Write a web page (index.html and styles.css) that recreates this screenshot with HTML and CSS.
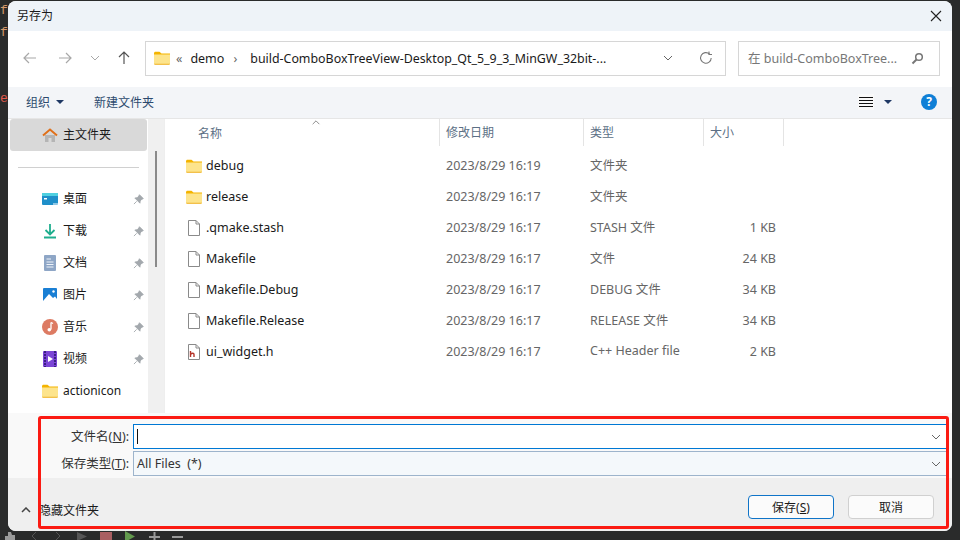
FILE: index.html
```html
<!DOCTYPE html>
<html lang="zh-CN">
<head>
    <meta charset="UTF-8">
    <title>另存为</title>
    <link rel="stylesheet" href="styles.css">
</head>
<body>
    <svg width="0" height="0" class="defs">
        <symbol id="folder" viewBox="0 0 16 14">
            <path d="M0 2.200C0 1.300.6.7 1.500.7H5.500L7.500 2.500H16V4H0Z" fill="#f4b400"/>
            <path d="M0 3.500H16V12.500C16 13.200 15.500 13.700 14.800 13.700H1.200C.5 13.700 0 13.200 0 12.500Z" fill="#fde48c"/>
            <path d="M0 12.700H16V12.800C16 13.300 15.500 13.700 14.800 13.700H1.200C.5 13.700 0 13.300 0 12.800Z" fill="#efb32c"/>
        </symbol>
        <symbol id="file" viewBox="0 0 14 16">
            <path d="M1.500.5H9L12.500 4V15.500H1.500Z" fill="#fff" stroke="#8a8a8a"/>
            <path d="M9 .5V4H12.500" fill="none" stroke="#8a8a8a"/>
        </symbol>
        <symbol id="pin" viewBox="0 0 12 12">
            <path d="M7 .8 11.200 5 9.800 5.600 7.800 7.600 7.600 10 2 4.400 4.400 4.200 6.400 2.200ZM4 8 1 11" fill="#a3a8ad" stroke="#a3a8ad"/>
        </symbol>
        <symbol id="chev" viewBox="0 0 10 6">
            <path d="M1 1 5 5 9 1" fill="none" stroke="currentColor" stroke-width="1"/>
        </symbol>
    </svg>

    <div class="side-code">
        <span class="code-f">f</span>
        <span class="code-f">f</span>
        <span class="code-e">e</span>
    </div>

    <div class="dialog">
        <div class="titlebar">
            <span>另存为</span>
            <svg class="close" width="12" height="12" viewBox="0 0 12 12"><path d="M1 1 11 11M11 1 1 11" stroke="#222" stroke-width="1.100"/></svg>
        </div>

        <div class="navbar">
            <svg class="nav-icon" width="14" height="12" viewBox="0 0 14 12"><path d="M13 6H1M6 1 1 6 6 11" fill="none" stroke="#a8a8a8" stroke-width="1.200"/></svg>
            <svg class="nav-icon fwd" width="14" height="12" viewBox="0 0 14 12"><path d="M1 6H13M8 1 13 6 8 11" fill="none" stroke="#a8a8a8" stroke-width="1.200"/></svg>
            <svg class="nav-chev" width="10" height="6"><use href="#chev"/></svg>
            <svg class="nav-up" width="12" height="14" viewBox="0 0 12 14"><path d="M6 13V1M1 6 6 1 11 6" fill="none" stroke="#555" stroke-width="1.200"/></svg>
            <div class="address">
                <svg class="addr-folder" width="16" height="14"><use href="#folder"/></svg>
                <span class="crumb-more">«</span>
                <span class="crumb">demo</span>
                <span class="crumb-sep">›</span>
                <span class="crumb crumb-long">build-ComboBoxTreeView-Desktop_Qt_5_9_3_MinGW_32bit-...</span>
                <svg class="addr-chev" width="10" height="6"><use href="#chev"/></svg>
                <svg class="refresh" width="14" height="14" viewBox="0 0 14 14"><path d="M12.200 7A5.300 5.300 0 1 1 10.500 3" fill="none" stroke="#777" stroke-width="1.100"/><path d="M10 .5V3.500H13" fill="none" stroke="#777" stroke-width="1.100"/></svg>
            </div>
            <div class="search">
                <span>在 build-ComboBoxTree...</span>
                <svg width="13" height="13" viewBox="0 0 13 13"><circle cx="8" cy="5" r="3.300" fill="none" stroke="#777" stroke-width="1.500"/><path d="M5.500 7.500 1.500 11.500" stroke="#777" stroke-width="2"/></svg>
            </div>
        </div>

        <div class="toolbar">
            <span class="organize">组织</span>
            <span class="caret"></span>
            <span class="new-folder">新建文件夹</span>
            <div class="toolbar-right">
                <span class="view-btn"><i></i><i></i><i></i><i></i></span>
                <span class="caret"></span>
                <span class="help">?</span>
            </div>
        </div>

        <div class="main">
            <div class="sidebar">
                <div class="home-item">
                    <svg width="16" height="15" viewBox="0 0 16 15"><path d="M3 7V14H6.500V10H9.500V14H13V7Z" fill="#b5b5b5"/><path d="M1 7.500 8 1.500 15 7.500" fill="none" stroke="#e0701a" stroke-width="2"/></svg>
                    <span>主文件夹</span>
                </div>
                <div class="side-rule"></div>
                <div class="side-item">
                    <svg width="16" height="12" viewBox="0 0 16 12"><rect width="16" height="12" rx="1" fill="#1f8fc9"/><rect width="16" height="3" fill="#4fd0e0"/><rect x="2" y="5" width="3" height="1.500" fill="#fff"/><rect x="11" y="10.500" width="5" height="1" fill="#fff"/></svg>
                    <span>桌面</span><svg class="pin" width="11" height="11"><use href="#pin"/></svg>
                </div>
                <div class="side-item">
                    <svg width="16" height="16" viewBox="0 0 16 16"><path d="M8 1V11M3.500 7 8 11.500 12.500 7" fill="none" stroke="#1fae8e" stroke-width="1.800"/><path d="M2 14.500H14" stroke="#1fae8e" stroke-width="2"/></svg>
                    <span>下载</span><svg class="pin" width="11" height="11"><use href="#pin"/></svg>
                </div>
                <div class="side-item">
                    <svg width="16" height="16" viewBox="0 0 16 16"><rect x="2" width="12" height="16" rx="1" fill="#8ea6c6"/><path d="M4.500 4H9M4.500 7H11.500M4.500 9.500H11.500M4.500 12H11.500" stroke="#eef3f9" stroke-width="1"/></svg>
                    <span>文档</span><svg class="pin" width="11" height="11"><use href="#pin"/></svg>
                </div>
                <div class="side-item">
                    <svg width="16" height="16" viewBox="0 0 16 16"><rect x="1" y="1" width="14" height="14" rx="1" fill="#1a7fd4"/><path d="M1 14 7 7 11 11 13 9.500 15 12V15H1Z" fill="#fff"/><circle cx="11.500" cy="4.500" r="1.200" fill="#fff"/></svg>
                    <span>图片</span><svg class="pin" width="11" height="11"><use href="#pin"/></svg>
                </div>
                <div class="side-item">
                    <svg width="16" height="16" viewBox="0 0 16 16"><circle cx="8" cy="8" r="8" fill="#dd7b63"/><path d="M9 3.500V10.500" stroke="#fff" stroke-width="1.300"/><circle cx="7.300" cy="10.800" r="1.800" fill="#fff"/><path d="M9 3.500 11 4.500" stroke="#fff" stroke-width="1.300"/></svg>
                    <span>音乐</span><svg class="pin" width="11" height="11"><use href="#pin"/></svg>
                </div>
                <div class="side-item">
                    <svg width="16" height="16" viewBox="0 0 16 16"><rect x="1" width="14" height="16" rx="1" fill="#7b45d6"/><path d="M3 0V16M13 0V16" stroke="#3c1f85" stroke-width="2" stroke-dasharray="2 1"/><path d="M6 5 11 8 6 11Z" fill="#fff"/></svg>
                    <span>视频</span><svg class="pin" width="11" height="11"><use href="#pin"/></svg>
                </div>
                <div class="side-item">
                    <svg width="16" height="14"><use href="#folder"/></svg>
                    <span>actionicon</span>
                </div>
            </div>

            <div class="side-scroll"><div class="thumb"></div></div>

            <div class="files">
                <div class="file-head">
                    <svg class="sort-up" width="10" height="5" viewBox="0 0 10 6"><path d="M1 5 5 1 9 5" fill="none" stroke="#777" stroke-width="1"/></svg>
                    <span class="col-name head-name">名称</span>
                    <span class="col-date">修改日期</span>
                    <span class="col-type">类型</span>
                    <span class="col-size">大小</span>
                </div>
                <div class="file-row">
                    <span class="col-name"><svg width="16" height="14"><use href="#folder"/></svg>debug</span>
                    <span class="col-date">2023/8/29 16:19</span><span class="col-type">文件夹</span><span class="col-size"></span>
                </div>
                <div class="file-row">
                    <span class="col-name"><svg width="16" height="14"><use href="#folder"/></svg>release</span>
                    <span class="col-date">2023/8/29 16:17</span><span class="col-type">文件夹</span><span class="col-size"></span>
                </div>
                <div class="file-row">
                    <span class="col-name"><svg width="16" height="16"><use href="#file"/></svg>.qmake.stash</span>
                    <span class="col-date">2023/8/29 16:17</span><span class="col-type">STASH 文件</span><span class="col-size">1 KB</span>
                </div>
                <div class="file-row">
                    <span class="col-name"><svg width="16" height="16"><use href="#file"/></svg>Makefile</span>
                    <span class="col-date">2023/8/29 16:17</span><span class="col-type">文件</span><span class="col-size">24 KB</span>
                </div>
                <div class="file-row">
                    <span class="col-name"><svg width="16" height="16"><use href="#file"/></svg>Makefile.Debug</span>
                    <span class="col-date">2023/8/29 16:17</span><span class="col-type">DEBUG 文件</span><span class="col-size">34 KB</span>
                </div>
                <div class="file-row">
                    <span class="col-name"><svg width="16" height="16"><use href="#file"/></svg>Makefile.Release</span>
                    <span class="col-date">2023/8/29 16:17</span><span class="col-type">RELEASE 文件</span><span class="col-size">34 KB</span>
                </div>
                <div class="file-row">
                    <span class="col-name"><svg width="16" height="16" viewBox="0 0 16 16"><use href="#file"/><path d="M4.500 7V13M4.500 10.500C6 8.800 8 9 8 10.500V13" fill="none" stroke="#b5352a" stroke-width="1.400"/></svg>ui_widget.h</span>
                    <span class="col-date">2023/8/29 16:17</span><span class="col-type">C++ Header file</span><span class="col-size">2 KB</span>
                </div>
            </div>
        </div>

        <div class="save-form">
            <div class="form-row">
                <label>文件名(<u>N</u>):</label>
                <div class="name-input"><span class="text-cursor"></span><svg width="10" height="6"><use href="#chev"/></svg></div>
            </div>
            <div class="form-row">
                <label>保存类型(<u>T</u>):</label>
                <div class="type-select"><span>All Files&nbsp; (*)</span><svg width="10" height="6"><use href="#chev"/></svg></div>
            </div>
        </div>

        <div class="footer">
            <svg class="hide-chev" width="10" height="6" viewBox="0 0 10 6"><path d="M1 5 5 1 9 5" fill="none" stroke="#444" stroke-width="1.500"/></svg>
            <span class="hide-label">隐藏文件夹</span>
            <button class="btn btn-save">保存(<u>S</u>)</button>
            <button class="btn">取消</button>
        </div>
    </div>

    <div class="red-mark"></div>

    <svg class="bottom-strip" width="200" height="9" viewBox="0 0 200 9">
        <path d="M8 1H11L12 4H15V9H5V5H8Z" fill="#9a9a9a"/>
        <path d="M36 1 32 5 36 9M56 1 60 5 56 9" fill="none" stroke="#555" stroke-width="1"/>
        <path d="M77 1 87 5.500 77 10Z" fill="#555"/>
        <rect x="100" y="1" width="12" height="9" fill="#a95f62"/>
        <path d="M125 0 135 5.500 125 11Z" fill="#639a4e"/>
        <path d="M149 6H160M154.500 1V10" stroke="#9a9a9a" stroke-width="2"/>
        <path d="M172 6H183" stroke="#9a9a9a" stroke-width="2"/>
    </svg>
</body>
</html>
```

FILE: styles.css
```css
* {
    box-sizing: border-box;
}
html, body {
    margin: 0;
    height: 540px;
    overflow: hidden;
}
body {
    position: relative;
    padding: 1px 8px 0;
    background-color: #2a2b2b;
    font-family: "Noto Sans", "Noto Sans CJK SC", sans-serif;
    font-size: 12.5px;
    color: #1a1a1a;
}
.defs {
    position: absolute;
}
.side-code {
    position: absolute;
    left: 0;
    top: 0;
    width: 8px;
    display: flex;
    flex-direction: column;
    font-family: "Liberation Mono", monospace;
    font-size: 13px;
    line-height: 22px;
}
.code-f {
    color: #d69a6a;
}
.code-e {
    margin-top: 44px;
    color: #e0584a;
}
.dialog {
    width: 944px;
    height: 530px;
    display: flex;
    flex-direction: column;
    background-color: #fff;
    border-radius: 8px;
    overflow: hidden;
}
.titlebar {
    height: 30px;
    flex: none;
    display: flex;
    align-items: center;
    justify-content: space-between;
    padding: 0 10px 2px 9px;
    background-color: #eef3f8;
    font-size: 12px;
}
.close {
    margin-top: 2px;
}
.navbar {
    height: 56px;
    flex: none;
    display: flex;
    align-items: center;
    padding: 0 12px 2px 15px;
}
.nav-icon {
    margin-right: 21px;
    flex: none;
}
.nav-icon.fwd {
    margin-right: 18px;
}
.nav-chev {
    flex: none;
    margin: 0 18px 0 0;
    color: #a8a8a8;
}
.nav-up {
    flex: none;
}
.address {
    flex: none;
    width: 581px;
    height: 35px;
    margin-left: 15px;
    display: flex;
    align-items: center;
    padding: 0 12px 0 8px;
    border: 1px solid #d6d6d6;
}
.crumb-more {
    margin: 0 8px 0 6px;
    color: #666;
}
.crumb-sep {
    margin: 0 13px 0 9px;
    color: #666;
}
.crumb-long {
    flex: 1;
    white-space: nowrap;
    font-size: 12.4px;
}
.addr-chev {
    flex: none;
    margin-right: 26px;
    color: #666;
}
.refresh {
    flex: none;
}
.search {
    flex: none;
    width: 202px;
    height: 35px;
    margin-left: 12px;
    display: flex;
    align-items: center;
    justify-content: space-between;
    padding: 0 15px 0 9px;
    border: 1px solid #d6d6d6;
    color: #777;
}
.search span {
    margin-top: -2px;
}
.toolbar {
    height: 32px;
    flex: none;
    display: flex;
    align-items: center;
    padding: 0 15px 2px 18px;
    background-color: #f3f5f8;
    border-bottom: 1px solid #e6e6e6;
    color: #2c4a6e;
    font-size: 12px;
}
.caret {
    width: 0;
    height: 0;
    margin-left: 6px;
    border-left: 4px solid transparent;
    border-right: 4px solid transparent;
    border-top: 4px solid #1f3864;
}
.new-folder {
    margin-left: 30px;
}
.toolbar-right {
    margin-left: auto;
    display: flex;
    align-items: center;
}
.view-btn {
    width: 16px;
    height: 16px;
    display: flex;
    flex-direction: column;
    justify-content: center;
    gap: 2px;
    padding: 0 1px;
    background-color: #f9f9f9;
}
.view-btn i {
    height: 1px;
    background-color: #111;
}
.toolbar-right .caret {
    margin: 0 29px 0 10px;
}
.help {
    width: 16px;
    height: 16px;
    border-radius: 50%;
    background-color: #0f7fd6;
    color: #fff;
    font-size: 12px;
    font-weight: 700;
    line-height: 16px;
    text-align: center;
}
.main {
    height: 294px;
    flex: none;
    display: flex;
    overflow: hidden;
}
.sidebar {
    width: 140px;
    flex: none;
}
.home-item {
    height: 32px;
    margin: 0 1px 0 2px;
    display: flex;
    align-items: center;
    gap: 5px;
    padding-left: 32px;
    background-color: #d9d9d9;
    border-radius: 3px;
    font-size: 12px;
}
.home-item span {
    margin-top: -2px;
}
.side-rule {
    height: 1px;
    margin: 16px 9px 15px 10px;
    background-color: #d0d0d0;
}
.side-item {
    height: 32px;
    display: flex;
    align-items: center;
    font-size: 12px;
}
.side-item svg:first-child {
    width: 16px;
    margin: 0 5px 0 34px;
}
.side-item span {
    flex: 1;
    margin-top: -2px;
}
.pin {
    margin-right: 4px;
}
.side-scroll {
    width: 16px;
    flex: none;
    padding: 32px 0 0 7px;
    background-color: #f0f0f0;
}
.thumb {
    width: 2px;
    height: 116px;
    background-color: #8a8a8a;
}
.files {
    flex: 1;
    position: relative;
    border-left: 1px solid #eee;
}
.file-head {
    height: 27px;
    display: flex;
    align-items: center;
    color: #5c6f85;
    font-size: 12px;
}
.sort-up {
    position: absolute;
    left: 146px;
    top: 1px;
}
.file-row {
    height: 31px;
    display: flex;
    align-items: center;
    color: #666;
}
.file-head + .file-row {
    margin-top: 4px;
}
.col-name {
    width: 275px;
    flex: none;
    display: flex;
    align-items: center;
    gap: 4px;
    padding-left: 21px;
    color: #1a1a1a;
}
.head-name {
    width: 274px;
    padding-left: 33px;
    color: #5c6f85;
}
.col-date {
    width: 144px;
    flex: none;
    padding-left: 6px;
}
.col-type {
    width: 120px;
    flex: none;
    padding-left: 6px;
}
.file-row .col-type {
    margin-top: -2px;
}
.col-size {
    width: 81px;
    flex: none;
    padding-left: 6px;
}
.file-row .col-size {
    width: 80px;
    padding: 0 8px 0 0;
    text-align: right;
}
.file-head span + span {
    height: 27px;
    line-height: 27px;
    border-left: 1px solid #e4e4e4;
}
.file-head .col-size {
    border-right: 1px solid #e4e4e4;
}
.save-form {
    height: 65px;
    flex: none;
    display: flex;
    flex-direction: column;
    gap: 2px;
    padding: 11px 5px 0 0;
    background-color: #f9f9f9;
}
.form-row {
    height: 25px;
    display: flex;
    align-items: center;
}
.form-row label {
    width: 121px;
    margin: -2px 4px 0 0;
    text-align: right;
    font-size: 12.5px;
    color: #333;
}
.name-input, .type-select {
    flex: 1;
    height: 25px;
    display: flex;
    align-items: center;
    justify-content: space-between;
    padding: 0 5px 0 3px;
    color: #666;
}
.name-input {
    background-color: #fff;
    border: 1px solid #0078d4;
}
.type-select {
    background-color: #f4f8fb;
    border: 1px solid #9db4cc;
}
.type-select span {
    color: #333;
}
.text-cursor {
    width: 1px;
    height: 15px;
    background-color: #111;
}
.footer {
    flex: 1;
    display: flex;
    align-items: center;
    padding: 4px 18px 0 13px;
    background-color: #efefef;
    font-size: 12px;
}
.hide-chev {
    margin-top: 6px;
}
.hide-label {
    margin: 6px auto 0 8px;
}
.btn {
    width: 86px;
    height: 24px;
    margin-left: 14px;
    padding: 0;
    background-color: #fbfbfb;
    border: 1px solid #d0d0d0;
    border-radius: 4px;
    font: inherit;
    color: #1a1a1a;
}
.btn-save {
    border-color: #0f74c8;
}
.red-mark {
    position: absolute;
    left: 38px;
    top: 416px;
    width: 911px;
    height: 113px;
    border: 3px solid #fb1a12;
    border-radius: 3px;
}
.bottom-strip {
    position: absolute;
    left: 0;
    bottom: 0;
}
```
